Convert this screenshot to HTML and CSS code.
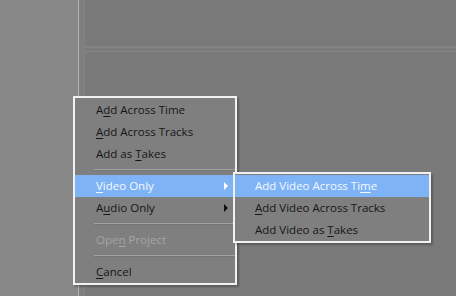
FILE: index.html
```html
<!DOCTYPE html>
<html>
<head>
<meta charset="UTF-8">
<title>Menu</title>
<link rel="stylesheet" href="styles.css">
</head>
<body>

<div class="wrap">
    <div class="side"></div>
    <div class="split"></div>
    <div class="main">
        <div class="gutter"></div>
        <div class="tracks">
            <div class="track-top"></div>
            <div class="track-line"></div>
            <div class="track-body"></div>
        </div>
    </div>
</div>

<ul class="menu menu-main">
    <li>A<u>d</u>d Across Time</li>
    <li><u>A</u>dd Across Tracks</li>
    <li>Add as <u>T</u>akes</li>
    <li class="sep"></li>
    <li class="on sub"><u>V</u>ideo Only</li>
    <li class="sub">A<u>u</u>dio Only</li>
    <li class="sep"></li>
    <li class="off">Ope<u>n</u> Project</li>
    <li class="sep"></li>
    <li><u>C</u>ancel</li>
</ul>

<ul class="menu menu-sub">
    <li class="on">Add Video Across Ti<u>m</u>e</li>
    <li><u>A</u>dd Video Across Tracks</li>
    <li>Add Video as <u>T</u>akes</li>
</ul>

</body>
</html>
```

FILE: styles.css
```css
* {
    margin: 0;
    padding: 0;
    box-sizing: border-box;
}

html, body {
    width: 456px;
    height: 296px;
    overflow: hidden;
}

body {
    position: relative;
    background: #7b7b7b;
    font-family: "Open Sans", "Liberation Sans", sans-serif;
    font-size: 11.5px;
    color: #161616;
}

.wrap {
    display: flex;
    height: 100%;
}

.side {
    width: 78px;
    background: #878787;
}

.split {
    width: 1px;
    background: #b4b4b4;
}

.main {
    flex: 1;
    display: flex;
}

.gutter {
    width: 6px;
    background: #7e7e7e;
    border-right: 1px solid #838383;
}

.tracks {
    flex: 1;
    display: flex;
    flex-direction: column;
}

.track-top {
    height: 46px;
    background: #7a7a7a;
}

.track-line {
    height: 6px;
    border-top: 2px solid #838383;
    border-bottom: 1px solid #868686;
    background: #7b7b7b;
}

.track-body {
    flex: 1;
    background: #7a7a7a;
}

.menu {
    position: absolute;
    list-style: none;
    background: #7f7f7f;
    border: 2px solid #f2f2f2;
    padding: 1px 0;
    box-shadow: 2px 2px 2px rgba(0, 0, 0, 0.25);
}

.menu-main {
    left: 73px;
    top: 96px;
    width: 164px;
    height: 189px;
}

.menu-sub {
    left: 233px;
    top: 172px;
    width: 198px;
    height: 71px;
    z-index: 2;
}

.menu li {
    position: relative;
    height: 22px;
    line-height: 22px;
    padding-left: 21px;
    white-space: nowrap;
}

.menu-sub li {
    padding-left: 20px;
}

.menu li u {
    text-decoration-thickness: 1px;
    text-underline-offset: 2px;
}

.menu li.sep {
    height: 10px;
    margin-left: 19px;
    padding: 0;
}

.menu li.sep::after {
    content: "";
    position: absolute;
    left: 0;
    right: 0;
    top: 4px;
    border-top: 1px solid #a2a2a2;
    border-bottom: 1px solid #757575;
}

.menu li.on {
    background: #7eb4f6;
    color: #f4f8ff;
}

.menu li.off {
    color: #a6a6a6;
}

.menu li.sub::after {
    content: "";
    position: absolute;
    right: 7px;
    top: 7px;
    border-left: 4px solid #111;
    border-top: 4px solid transparent;
    border-bottom: 4px solid transparent;
}

.menu li.on.sub::after {
    border-left-color: #fff;
}
```
